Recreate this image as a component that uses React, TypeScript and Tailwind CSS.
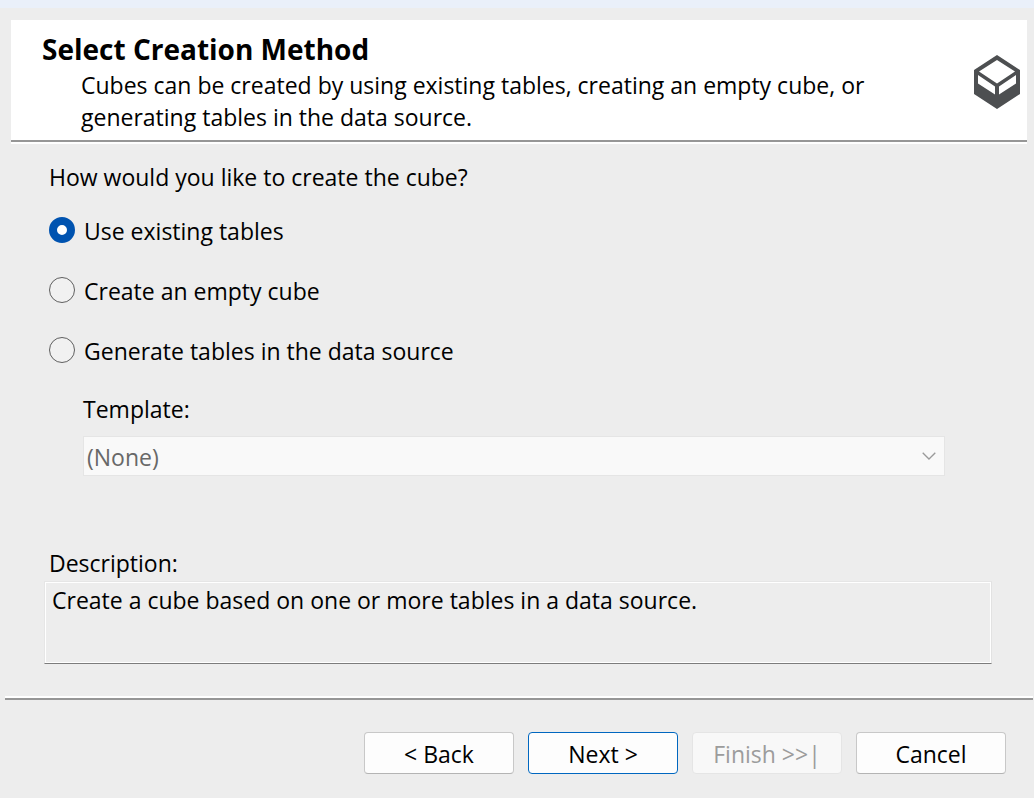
import { useState } from 'react';

const methods = [
  { id: 'existing', label: 'Use existing tables' },
  { id: 'empty', label: 'Create an empty cube' },
  { id: 'generate', label: 'Generate tables in the data source' },
];

const buttonBase =
  'h-[42px] w-[150px] rounded-[4px] border pt-[2px] text-center leading-8 whitespace-nowrap';

function CubeIcon() {
  return (
    <svg viewBox="0 0 46 54" className="h-[54px] w-[46px] shrink-0" aria-hidden="true">
      <path
        fill="#4d4f51"
        fillRule="evenodd"
        d="M23 0 46 15V39L23 54 0 39V15ZM23 5 5 16.500 23 28.500 41 16.500ZM4 20V28.500L21 39.500V31.500ZM42 20 25 31.500V39.500L42 28.500Z"
      />
    </svg>
  );
}

export default function App() {
  const [method, setMethod] = useState('existing');

  return (
    <div className="flex min-h-screen flex-col bg-[#ededed] font-['Open_Sans','Noto_Sans',sans-serif] text-[23px] leading-8 text-black">
      <div className="h-2 bg-[#eaf0fa]" />

      <header className="mt-3 mr-[7px] ml-[11px] border-b-2 border-white bg-white">
        <div className="flex items-start justify-between border-b-2 border-[#969696] pt-[13px] pr-[7px] pb-[7px] pl-[31px]">
          <div>
            <h1 className="text-[28px] leading-8 font-bold">Select Creation Method</h1>
            <p className="mt-1 max-w-[840px] pl-[39px]">
              Cubes can be created by using existing tables, creating an empty cube, or generating
              tables in the data source.
            </p>
          </div>
          <div className="pt-[22px]">
            <CubeIcon />
          </div>
        </div>
      </header>

      <main className="flex flex-col pt-[17px] pr-[42px] pb-8 pl-[44px]">
        <fieldset className="pl-[5px]">
          <legend>How would you like to create the cube?</legend>
          <div className="mt-5 flex flex-col gap-[26px]">
            {methods.map((m) => (
              <label key={m.id} className="flex items-center gap-[9px]">
                <input
                  type="radio"
                  name="method"
                  value={m.id}
                  checked={method === m.id}
                  onChange={() => setMethod(m.id)}
                  className="size-[26px] shrink-0 appearance-none rounded-full border border-[#5f5f5f] bg-[#f1f1f1] checked:border-8 checked:border-[#0053b0] checked:bg-white"
                />
                <span className="pt-[2px]">{m.label}</span>
              </label>
            ))}
          </div>
        </fieldset>

        <div className="mt-[26px] mr-[47px] ml-[39px] flex flex-col gap-[11px]">
          <label htmlFor="template">Template:</label>
          <div className="grid items-center">
            <select
              id="template"
              disabled={method !== 'generate'}
              className="col-start-1 row-start-1 h-10 w-full appearance-none border border-[#e5e5e5] bg-[#f9f9f9] pt-[2px] pl-[3px] leading-8 text-black disabled:text-[#686868] disabled:opacity-100"
            >
              <option>(None)</option>
            </select>
            <svg
              viewBox="0 0 14 8"
              className="pointer-events-none col-start-1 row-start-1 mr-[9px] h-2 w-[14px] justify-self-end"
              aria-hidden="true"
            >
              <path d="M0.700 0.700 7 7 13.300 0.700" fill="none" stroke="#9a9a9a" strokeWidth="1.300" />
            </svg>
          </div>
        </div>

        <section className="mt-[71px]">
          <h2 className="pl-[5px]">Description:</h2>
          <div className="mt-[2px] border border-t-[#e6e6e6] border-r-[#e2e2e2] border-b-[#7c7c7c] border-l-[#e6e6e6]">
            <p className="min-h-[81px] border border-white px-[6px] pt-px">
              Create a cube based on one or more tables in a data source.
            </p>
          </div>
        </section>
      </main>

      <footer className="ml-[5px]">
        <div className="mr-px h-1 border-t-2 border-b-2 border-t-white border-b-[#969696]" />
        <div className="flex justify-end gap-[14px] pt-8 pr-7 pb-6">
          <button type="button" className={`${buttonBase} border-[#c8c8c8] border-b-[#b4b4b4] bg-[#fdfdfd]`}>
            &lt; Back
          </button>
          <button type="button" className={`${buttonBase} border-[#0067c0] bg-[#fdfdfd]`}>
            Next &gt;
          </button>
          <button
            type="button"
            disabled
            className={`${buttonBase} border-[#e5e5e5] bg-[#f8f8f8] text-[#9c9c9c]`}
          >
            Finish &gt;&gt;|
          </button>
          <button type="button" className={`${buttonBase} border-[#c8c8c8] border-b-[#b4b4b4] bg-[#fdfdfd]`}>
            Cancel
          </button>
        </div>
      </footer>
    </div>
  );
}
